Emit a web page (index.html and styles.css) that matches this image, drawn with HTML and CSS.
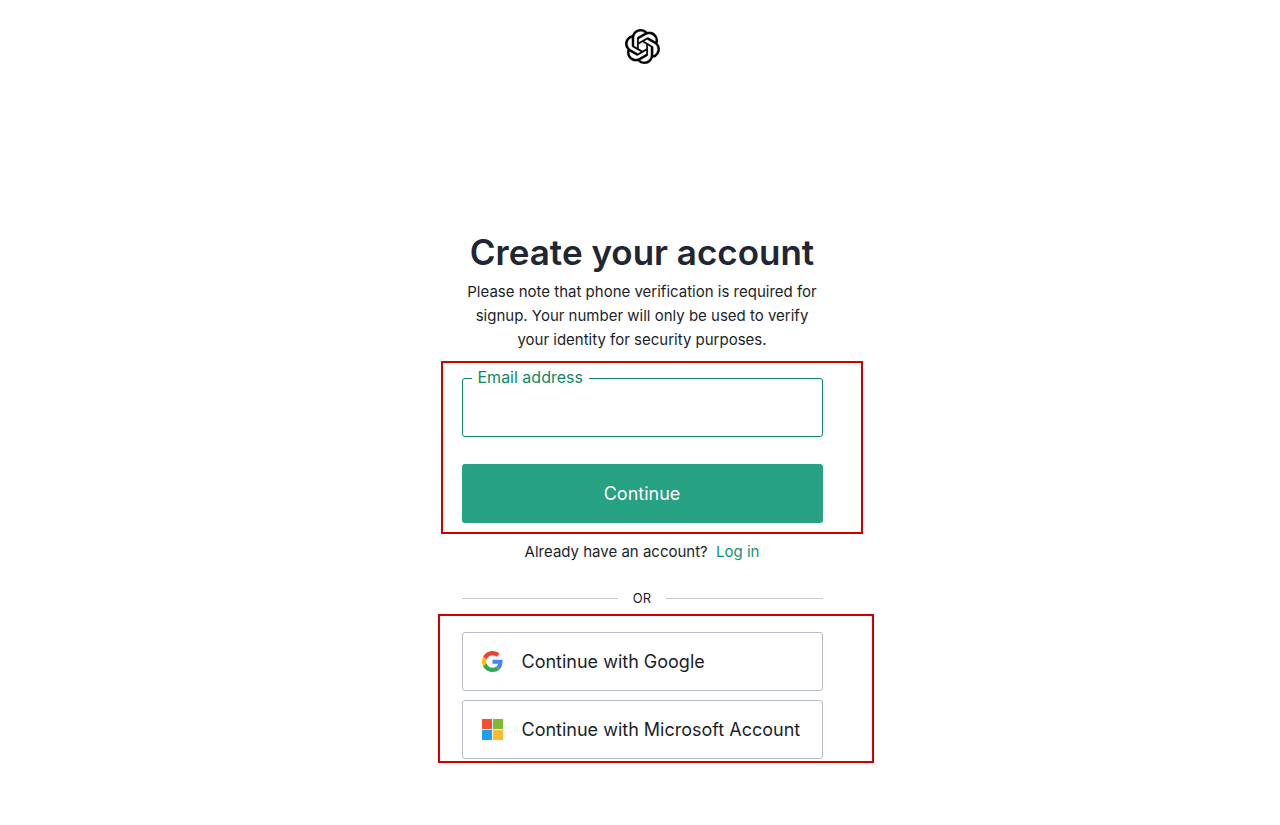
FILE: index.html
```html
<!DOCTYPE html>
<html lang="en">
<head>
<meta charset="utf-8">
<meta name="viewport" content="width=device-width, initial-scale=1">
<title>Create your account</title>
<link rel="stylesheet" href="styles.css">
</head>
<body>
<div class="page">
  <header class="header">
    <svg class="logo" viewBox="0 0 24 24" role="img" aria-label="OpenAI"><path fill="currentColor" stroke="currentColor" stroke-width=".15" d="M22.2819 9.8211a5.9847 5.9847 0 0 0-.5157-4.9108 6.0462 6.0462 0 0 0-6.5098-2.9A6.0651 6.0651 0 0 0 4.9807 4.1818a5.9847 5.9847 0 0 0-3.9977 2.9 6.0462 6.0462 0 0 0 .7427 7.0966 5.98 5.98 0 0 0 .511 4.9107 6.051 6.051 0 0 0 6.5146 2.9001A5.9847 5.9847 0 0 0 13.2599 24a6.0557 6.0557 0 0 0 5.7718-4.2058 5.9894 5.9894 0 0 0 3.9977-2.9001 6.0557 6.0557 0 0 0-.7475-7.0729zm-9.022 12.6081a4.4755 4.4755 0 0 1-2.8764-1.0408l.1419-.0804 4.7783-2.7582a.7948.7948 0 0 0 .3927-.6813v-6.7369l2.02 1.1686a.071.071 0 0 1 .038.052v5.5826a4.504 4.504 0 0 1-4.4945 4.4944zm-9.6607-4.1254a4.4708 4.4708 0 0 1-.5346-3.0137l.142.0852 4.783 2.7582a.7712.7712 0 0 0 .7806 0l5.8428-3.3685v2.3324a.0804.0804 0 0 1-.0332.0615L9.74 19.9502a4.4992 4.4992 0 0 1-6.1408-1.6464zM2.3408 7.8956a4.485 4.485 0 0 1 2.3655-1.9728V11.6a.7664.7664 0 0 0 .3879.6765l5.8144 3.3543-2.0201 1.1685a.0757.0757 0 0 1-.071 0l-4.8303-2.7865A4.504 4.504 0 0 1 2.3408 7.872zm16.5963 3.8558L13.1038 8.364 15.1192 7.2a.0757.0757 0 0 1 .071 0l4.8303 2.7913a4.4944 4.4944 0 0 1-.6765 8.1042v-5.6772a.79.79 0 0 0-.407-.667zm2.0107-3.0231l-.142-.0852-4.7735-2.7818a.7759.7759 0 0 0-.7854 0L9.409 9.2297V6.8974a.0662.0662 0 0 1 .0284-.0615l4.8303-2.7866a4.4992 4.4992 0 0 1 6.6802 4.66zM8.3065 12.863l-2.02-1.1638a.0804.0804 0 0 1-.038-.0567V6.0742a4.4992 4.4992 0 0 1 7.3757-3.4537l-.142.0805L8.704 5.459a.7948.7948 0 0 0-.3927.6813zm1.0976-2.3654l2.602-1.4998 2.6069 1.4998v2.9994l-2.5974 1.4997-2.6067-1.4997Z"/></svg>
  </header>
  <main class="card">
    <h1 class="title">Create your account</h1>
    <p class="intro">Please note that phone verification is required for signup. Your number will only be used to verify your identity for security purposes.</p>
    <form class="form">
      <div class="field">
        <label class="field-label" for="email">Email address</label>
        <input class="field-input" id="email" name="email" type="email" autocomplete="email">
      </div>
      <button class="submit" type="submit">Continue</button>
    </form>
    <p class="login">Already have an account? <a class="login-link" href="#">Log in</a></p>
    <div class="divider">OR</div>
    <div class="providers">
      <button class="provider" type="button">
        <svg class="provider-icon" viewBox="0 0 48 48" aria-hidden="true">
          <path fill="#EA4335" d="M24 9.5c3.54 0 6.71 1.22 9.21 3.6l6.85-6.85C35.9 2.38 30.47 0 24 0 14.62 0 6.51 5.38 2.56 13.22l7.98 6.19C12.43 13.72 17.74 9.5 24 9.5z"/>
          <path fill="#4285F4" d="M46.98 24.55c0-1.57-.15-3.09-.38-4.55H24v9.02h12.94c-.58 2.96-2.26 5.48-4.78 7.18l7.73 6c4.51-4.18 7.09-10.36 7.09-17.65z"/>
          <path fill="#FBBC05" d="M10.53 28.59c-.48-1.45-.76-2.99-.76-4.59s.27-3.14.76-4.59l-7.98-6.19C.92 16.46 0 20.12 0 24c0 3.88.92 7.54 2.56 10.78l7.97-6.19z"/>
          <path fill="#34A853" d="M24 48c6.48 0 11.93-2.13 15.89-5.81l-7.73-6c-2.15 1.45-4.92 2.3-8.16 2.3-6.26 0-11.57-4.22-13.47-9.91l-7.98 6.19C6.51 42.62 14.62 48 24 48z"/>
        </svg>
        <span>Continue with Google</span>
      </button>
      <button class="provider" type="button">
        <svg class="provider-icon" viewBox="0 0 21 21" aria-hidden="true">
          <path fill="#f1512e" d="M0 0h10v10H0z"/>
          <path fill="#80b934" d="M11 0h10v10H11z"/>
          <path fill="#1ba1ee" d="M0 11h10v10H0z"/>
          <path fill="#ffb933" d="M11 11h10v10H11z"/>
        </svg>
        <span>Continue with Microsoft Account</span>
      </button>
    </div>
  </main>
</div>
</body>
</html>
```
FILE: styles.css
```css
* {
  box-sizing: border-box;
}

body {
  margin: 0;
  background: #fff;
  color: #1a1f2a;
  font-family: Inter, "Liberation Sans", sans-serif;
  font-size: 15px;
  line-height: 24px;
}

.page {
  display: flex;
  flex-direction: column;
  align-items: center;
  padding: 29px 16px 32px 20px;
}

.header {
  display: flex;
  margin-bottom: 164px;
}

.logo {
  width: 35px;
  height: 35px;
  color: #000;
}

.card {
  display: flex;
  flex-direction: column;
  width: 100%;
  max-width: 361px;
}

.title {
  margin: 0;
  color: #202632;
  font-size: 35px;
  font-weight: 600;
  line-height: 48px;
  text-align: center;
}

.intro {
  margin: 4px 0 0;
  text-align: center;
}

.form,
.providers {
  position: relative;
  display: flex;
  flex-direction: column;
}

.form {
  gap: 27px;
  margin-top: 26px;
}

.providers {
  gap: 9px;
  margin-top: 22px;
}

/* Red frames drawn over the two sign-up areas */
.form::after,
.providers::after {
  content: "";
  position: absolute;
  border: 2px solid #d10000;
  pointer-events: none;
}

.form::after {
  inset: -17px -40px -11px -21px;
}

.providers::after {
  inset: -18px -51px -4px -24px;
}

.field {
  position: relative;
  display: flex;
}

.field-label {
  position: absolute;
  top: -13px;
  left: 10px;
  padding: 0 6px;
  background: #fff;
  color: #108767;
  font-size: 16px;
}

.field-input {
  width: 100%;
  height: 59px;
  padding: 0 16px;
  border: 1px solid #108767;
  border-radius: 3px;
  background: #fff;
  color: inherit;
  font: inherit;
  outline: none;
}

.submit {
  height: 59px;
  border: 0;
  border-radius: 3px;
  background: #26a181;
  color: #fff;
  font: inherit;
  font-size: 18px;
}

.login {
  margin: 17px 0 0;
  text-align: center;
}

.login-link {
  margin-left: 4px;
  color: #10946f;
  text-decoration: none;
}

.divider {
  display: flex;
  align-items: center;
  gap: 15px;
  margin-top: 22px;
  font-size: 13px;
}

.divider::before,
.divider::after {
  content: "";
  flex: 1;
  height: 1px;
  background: #c2c8d0;
}

.provider {
  display: flex;
  align-items: center;
  gap: 19px;
  height: 59px;
  padding: 0 19px;
  border: 1px solid #b8bcc6;
  border-radius: 3px;
  background: #fff;
  color: inherit;
  font: inherit;
  font-size: 18px;
}

.provider-icon {
  flex: none;
  width: 21px;
  height: 21px;
}
```
